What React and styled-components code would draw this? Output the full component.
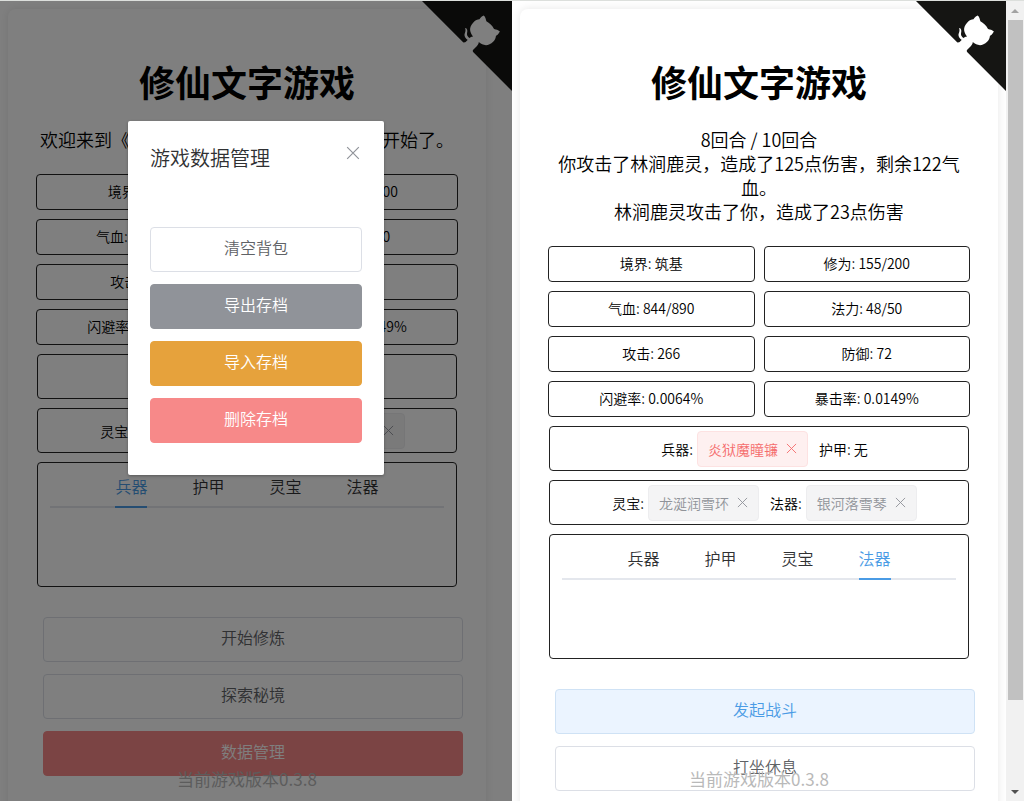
import React, { useState } from 'react'
import styled, { createGlobalStyle, css } from 'styled-components'

const attributes = [
  '境界: 筑基',
  '修为: 155/200',
  '气血: 844/890',
  '法力: 48/50',
  '攻击: 266',
  '防御: 72',
  '闪避率: 0.0064%',
  '暴击率: 0.0149%',
]

const tabs = ['兵器', '护甲', '灵宝', '法器']

const CloseIcon = () => (
  <svg viewBox="0 0 12 12" aria-hidden="true">
    <path d="M1 1L11 11M11 1L1 11" fill="none" stroke="currentColor" strokeWidth="1" />
  </svg>
)

const GithubCorner = () => (
  <Corner href="#github" aria-label="GitHub">
    <svg viewBox="0 0 250 250" aria-hidden="true">
      <path d="M0,0 L115,115 L130,115 L142,142 L250,250 L250,0 Z" fill="#151513" />
      <path
        d="M128.3,109.0 C113.8,99.7 119.0,89.6 119.0,89.6 C122.0,82.7 120.5,78.6 120.5,78.6 C119.2,72.0 123.4,76.3 123.4,76.3 C127.3,80.9 125.5,87.3 125.5,87.3 C122.9,97.6 130.6,101.9 134.4,103.2"
        fill="#fff"
      />
      <path
        d="M115.0,115.0 C114.9,115.1 118.7,116.5 119.8,115.4 L133.7,101.6 C136.9,99.2 139.9,98.4 142.2,98.6 C133.8,88.0 127.5,74.4 143.8,58.0 C148.5,53.4 154.0,51.2 159.7,51.0 C160.3,49.4 163.2,43.6 171.4,40.1 C171.4,40.1 176.1,42.5 178.8,56.2 C183.1,58.6 187.2,61.8 190.9,65.4 C194.5,69.0 197.7,73.2 200.1,77.6 C213.8,80.2 216.3,84.9 216.3,84.9 C212.7,93.1 206.9,96.0 205.4,96.6 C205.1,102.4 203.0,107.8 198.3,112.5 C181.9,128.9 168.3,122.5 157.7,114.1 C157.9,116.9 156.7,120.9 152.7,124.9 L141.0,136.5 C139.8,137.7 141.6,141.9 141.8,141.8 Z"
        fill="#fff"
      />
    </svg>
  </Corner>
)

const EquipTag = ({ type, children }) => (
  <Tag $type={type}>
    {children}
    <TagClose type="button" aria-label={`卸下${children}`}>
      <CloseIcon />
    </TagClose>
  </Tag>
)

const GamePage = ({ story, weapon, defaultTab, actions }) => {
  const [active, setActive] = useState(defaultTab)

  return (
    <Page>
      <Card>
        <Title>修仙文字游戏</Title>
        <Story>
          {story.map((line) => (
            <p key={line}>{line}</p>
          ))}
        </Story>
        <Attributes>
          {attributes.map((item) => (
            <Attribute key={item}>{item}</Attribute>
          ))}
        </Attributes>
        <Panels>
          <EquipRow>
            <Equip>兵器: {weapon ? <EquipTag type="danger">{weapon}</EquipTag> : '无'}</Equip>
            <Equip>护甲: 无</Equip>
          </EquipRow>
          <EquipRow>
            <Equip>灵宝: <EquipTag type="info">龙涎润雪环</EquipTag></Equip>
            <Equip>法器: <EquipTag type="info">银河落雪琴</EquipTag></Equip>
          </EquipRow>
          <Inventory>
            <TabList role="tablist">
              {tabs.map((tab) => (
                <Tab
                  key={tab}
                  type="button"
                  role="tab"
                  aria-selected={tab === active}
                  $active={tab === active}
                  onClick={() => setActive(tab)}
                >
                  {tab}
                </Tab>
              ))}
            </TabList>
          </Inventory>
        </Panels>
        <Actions>
          {actions.map(({ label, type }) => (
            <Button key={label} type="button" $type={type}>{label}</Button>
          ))}
        </Actions>
      </Card>
      <Version>当前游戏版本0.3.8</Version>
    </Page>
  )
}

const DataDialog = () => (
  <Overlay>
    <Dialog role="dialog" aria-label="游戏数据管理">
      <DialogHeader>
        <DialogTitle>游戏数据管理</DialogTitle>
        <DialogClose type="button" aria-label="关闭">
          <CloseIcon />
        </DialogClose>
      </DialogHeader>
      <ButtonStack>
        <Button type="button">清空背包</Button>
        <Button type="button" $type="info">导出存档</Button>
        <Button type="button" $type="warning">导入存档</Button>
        <Button type="button" $type="danger">删除存档</Button>
      </ButtonStack>
    </Dialog>
  </Overlay>
)

const App = () => {
  return (
    <>
      <GlobalStyle />
      <Screens>
        <Screen>
          <GamePage
            story={['欢迎来到《修仙文字游戏》，你的修仙之旅开始了。']}
            defaultTab="兵器"
            actions={[
              { label: '开始修炼' },
              { label: '探索秘境' },
              { label: '数据管理', type: 'danger' },
            ]}
          />
          <Gutter />
          <GithubCorner />
          <DataDialog />
        </Screen>
        <Screen>
          <GamePage
            story={[
              '8回合 / 10回合',
              '你攻击了林涧鹿灵，造成了125点伤害，剩余122气血。',
              '林涧鹿灵攻击了你，造成了23点伤害',
            ]}
            weapon="炎狱魔瞳镰"
            defaultTab="法器"
            actions={[
              { label: '发起战斗', type: 'primary' },
              { label: '打坐休息' },
            ]}
          />
          <Scrollbar aria-hidden="true">
            <Arrow $up />
            <Thumb />
            <Arrow />
          </Scrollbar>
          <GithubCorner />
        </Screen>
      </Screens>
    </>
  )
}

const GlobalStyle = createGlobalStyle`
  * {
    box-sizing: border-box;
  }

  body {
    margin: 0;
    background: #fff;
    color: #000;
    font-family: 'Noto Sans CJK SC', 'Noto Sans', sans-serif;
    font-size: 14px;
    font-weight: 350;
    text-spacing-trim: space-all;
  }

  h1, h2, p {
    margin: 0;
  }

  button {
    padding: 0;
    border: 0;
    background: none;
    font-family: inherit;
    font-weight: inherit;
    cursor: pointer;
  }

  svg {
    display: block;
    width: 100%;
  }
`;

const Screens = styled.main`
  display: grid;
  grid-template-columns: 1fr 1fr;
  height: 100vh;
  border-top: 1px solid #dcdfdc;
`;

const Gutter = styled.div`
  flex: 0 0 18px;
`;

const Scrollbar = styled.div`
  flex: 0 0 18px;
  display: flex;
  flex-direction: column;
  align-items: center;
  background: #f1f1f1;
`;

const Thumb = styled.div`
  width: 15px;
  height: 85%;
  margin-bottom: auto;
  background: #c1c1c1;
`;

const Arrow = styled.div`
  display: flex;
  align-items: center;
  height: 19px;

  &::before {
    content: '';
    border: 4px solid transparent;
    ${({ $up }) => $up
      ? css`border-top: 0; border-bottom-color: #a3a3a3;`
      : css`border-bottom: 0; border-top-color: #505050;`}
  }
`;

const Corner = styled.a`
  position: absolute;
  top: 0;
  right: 0;
  width: 90px;
`;

const Screen = styled.section`
  position: relative;
  display: flex;
  min-width: 0;
  overflow: hidden;

  ${Scrollbar} + ${Corner} {
    right: 18px;
  }
`;

const Page = styled.div`
  position: relative;
  flex: 1;
  min-width: 0;
  padding: 8px;
`;

const Card = styled.div`
  min-height: 100vh;
  padding: 47px 28px;
  border-radius: 8px;
  box-shadow: 0 0 10px rgba(0, 0, 0, .1);
`;

const Title = styled.h1`
  margin-bottom: 21px;
  font-size: 36px;
  font-weight: 700;
  line-height: 50px;
  text-align: center;
`;

const Story = styled.div`
  margin-bottom: 23px;
  font-size: 18px;
  line-height: 24px;
  text-align: center;
`;

const Attributes = styled.div`
  display: grid;
  grid-template-columns: 1fr 1fr;
  gap: 9px;
  margin-bottom: 9px;
`;

const Attribute = styled.div`
  padding: 6px 7px 8px;
  border: 1px solid #222;
  border-radius: 4px;
  line-height: 20px;
  text-align: center;
`;

const Panels = styled.div`
  display: grid;
  gap: 9px;
  margin: 0 1px 30px;
`;

const EquipRow = styled.div`
  display: flex;
  align-items: center;
  justify-content: center;
  min-height: 45px;
  border: 1px solid #222;
  border-radius: 4px;
`;

const Equip = styled.div`
  display: flex;
  align-items: center;
  gap: 4px;
  margin-left: 11px;
`;

const Tag = styled.span`
  display: flex;
  align-items: center;
  gap: 8px;
  height: 36px;
  padding: 0 10px;
  border: 1px solid;
  border-radius: 4px;
  ${({ $type }) => $type === 'danger'
    ? css`
      background: #fef0f0;
      border-color: #fde2e2;
      color: #f56c6c;
    `
    : css`
      background: #f4f4f5;
      border-color: #ededef;
      color: #909399;
    `}
`;

const TagClose = styled.button`
  width: 11px;
  color: inherit;
`;

const Inventory = styled.div`
  min-height: 125px;
  padding: 5px 12px;
  border: 1px solid #222;
  border-radius: 4px;
`;

const TabList = styled.div`
  display: flex;
  justify-content: center;
  gap: 45px;
  box-shadow: inset 0 -2px #e4e7ed;
`;

const Tab = styled.button`
  height: 40px;
  padding-bottom: 2px;
  border-bottom: 2px solid transparent;
  color: #303133;
  font-size: 16px;
  ${({ $active }) => $active && css`
    border-color: #4a9be5;
    color: #4a9be5;
  `}
`;

const ButtonStack = styled.div`
  display: grid;
  gap: 12px;
`;

const Actions = styled(ButtonStack)`
  margin: 0 -5px 0 7px;
`;

const buttonColors = {
  default: css`
    background: #fff;
    border-color: #dcdfe6;
    color: #606266;
  `,
  primary: css`
    background: #ebf4ff;
    border-color: #cfe2f5;
    color: #4a9be5;
  `,
  info: css`
    background: #909399;
    border-color: #909399;
    color: #fff;
  `,
  warning: css`
    background: #e6a23c;
    border-color: #e6a23c;
    color: #fff;
  `,
  danger: css`
    background: #f78989;
    border-color: #f78989;
    color: #fff;
  `,
}

const Button = styled.button`
  height: 45px;
  padding-bottom: 5px;
  border: 1px solid;
  border-radius: 4px;
  font-size: 16px;
  ${({ $type = 'default' }) => buttonColors[$type]}
`;

const Version = styled.p`
  position: absolute;
  right: 0;
  bottom: 10px;
  left: 0;
  color: #b9b9b9;
  font-size: 17px;
  font-weight: 400;
  line-height: 24px;
  text-align: center;
  pointer-events: none;
`;

const Overlay = styled.div`
  position: absolute;
  inset: 0;
  padding-top: 15vh;
  background: rgba(0, 0, 0, .5);
`;

const Dialog = styled.div`
  width: 50%;
  margin: 0 auto;
  padding: 22px 22px 32px;
  border-radius: 2px;
  background: #fff;
  box-shadow: 0 1px 3px rgba(0, 0, 0, .3);
`;

const DialogHeader = styled.div`
  display: flex;
  align-items: flex-start;
  justify-content: space-between;
  margin-bottom: 54px;
`;

const DialogTitle = styled.h2`
  color: #303133;
  font-size: 20px;
  font-weight: inherit;
  line-height: 30px;
`;

const DialogClose = styled.button`
  width: 18px;
  padding: 3px 2px;
  color: #909399;
`;

export default App
